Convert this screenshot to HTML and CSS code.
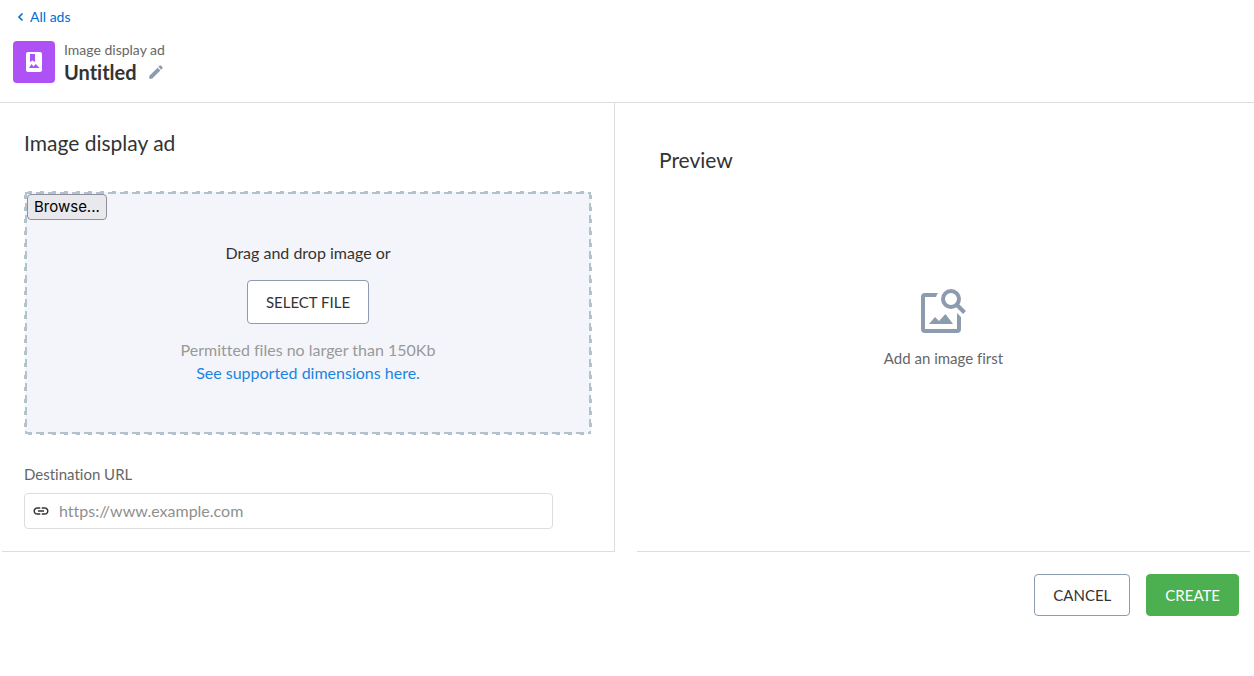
FILE: index.html
```html
<!DOCTYPE html>
<html lang="en">
<head>
<meta charset="utf-8">
<meta name="viewport" content="width=device-width, initial-scale=1">
<title>Image display ad</title>
<link rel="stylesheet" href="styles.css">
</head>
<body>
<header class="header">
  <a class="back" href="#">
    <svg class="back-icon" viewBox="0 0 7 10" aria-hidden="true"><path d="M5.500 1.500 2 5 5.500 8.500" fill="none" stroke="currentColor" stroke-width="1.600"/></svg>
    All ads
  </a>
  <div class="title-row">
    <div class="ad-icon">
      <svg viewBox="0 0 24 24" aria-hidden="true"><path fill="#fff" d="M18 2H6c-1.100 0-2 .9-2 2v16c0 1.100.9 2 2 2h12c1.100 0 2-.9 2-2V4c0-1.100-.9-2-2-2zM8 4h5v8l-2.500-1.500L8 12V4zM7 18l2.500-4 2 2.500 2.300-2.500L17.500 18H7z"/></svg>
    </div>
    <div>
      <div class="kind">Image display ad</div>
      <div class="name-row">
        <h1 class="name">Untitled</h1>
        <button class="edit" type="button" aria-label="Edit name">
          <svg viewBox="0 0 24 24" aria-hidden="true"><path fill="currentColor" d="M3 17.250V21h3.750L17.810 9.940l-3.750-3.750L3 17.250zM20.710 7.040a1 1 0 0 0 0-1.410l-2.340-2.340a1 1 0 0 0-1.410 0l-1.830 1.830 3.750 3.750 1.830-1.830z"/></svg>
        </button>
      </div>
    </div>
  </div>
</header>
<main>
  <div class="panels">
    <section class="panel editor">
      <h2 class="heading">Image display ad</h2>
      <div class="dropzone">
        <button class="browse" type="button">Browse...</button>
        <div class="drop-content">
          <p class="drop-text">Drag and drop image or</p>
          <button class="button" type="button">SELECT FILE</button>
          <p class="hint">Permitted files no larger than 150Kb</p>
          <a class="link" href="#">See supported dimensions here.</a>
        </div>
      </div>
      <label class="label" for="url">Destination URL</label>
      <div class="field">
        <svg class="field-icon" viewBox="0 0 24 24" aria-hidden="true"><path fill="currentColor" d="M3.900 12c0-1.710 1.390-3.100 3.100-3.100h4V7H7c-2.760 0-5 2.240-5 5s2.240 5 5 5h4v-1.900H7c-1.710 0-3.100-1.390-3.100-3.100zM8 13h8v-2H8v2zm9-6h-4v1.900h4c1.710 0 3.100 1.390 3.100 3.100s-1.390 3.100-3.100 3.100h-4V17h4c2.760 0 5-2.240 5-5s-2.240-5-5-5z"/></svg>
        <input class="input" id="url" type="url" placeholder="https://www.example.com">
      </div>
    </section>
    <section class="panel preview">
      <h2 class="heading">Preview</h2>
      <div class="empty">
        <svg class="empty-icon" viewBox="0 0 46 46" aria-hidden="true">
          <path fill="currentColor" d="M17 5H4Q0 5 0 9V41Q0 45 4 45H36Q40 45 40 41V29L36 25V41H4V9H15Q15.500 7 17 5Z"/>
          <circle cx="30" cy="11" r="8" fill="none" stroke="currentColor" stroke-width="4"/>
          <path d="M35.500 16.500 43.500 24.500" stroke="currentColor" stroke-width="4"/>
          <path fill="currentColor" d="M8 36 14 29 18 33 24.500 26 32 36Z"/>
        </svg>
        <p class="empty-text">Add an image first</p>
      </div>
    </section>
  </div>
  <div class="actions">
    <button class="button" type="button">CANCEL</button>
    <button class="button primary" type="button">CREATE</button>
  </div>
</main>
</body>
</html>
```
FILE: styles.css
```css
* { box-sizing: border-box; }
body {
  margin: 0;
  background: #fff;
  color: #333;
  font-family: Lato, "Open Sans", sans-serif;
  font-size: 16px;
  line-height: 24px;
  font-variant-ligatures: none;
}
h1, h2, p { margin: 0; font-weight: 400; }
button, input { font: inherit; color: inherit; }
button { cursor: pointer; }
svg { display: block; }
a { text-decoration: none; }
.header { border-bottom: 1px solid #ddd; padding: 8px 12px 17px 13px; }
.back {
  display: flex;
  align-items: center;
  gap: 6px;
  width: fit-content;
  margin-left: 4px;
  color: #0070d2;
  font-size: 14px;
  line-height: 18px;
}
.back-icon { width: 7px; height: 10px; }
.title-row { display: flex; gap: 9px; margin-top: 15px; }
.ad-icon {
  display: grid;
  place-items: center;
  width: 42px;
  height: 42px;
  border-radius: 4px;
  background: #ae52f5;
}
.ad-icon svg { width: 24px; height: 24px; }
.kind { color: #666; font-size: 14px; line-height: 18px; }
.name-row { display: flex; align-items: center; gap: 10px; }
.name { font-size: 20px; font-weight: 700; line-height: 26px; }
.edit { border: 0; padding: 0; background: none; color: #8c9bad; }
.edit svg { width: 18px; height: 18px; }
.panels {
  display: grid;
  grid-template-columns: 1fr 1fr;
  gap: 22px;
  padding: 0 4px 0 2px;
}
.panel { border-bottom: 1px solid #ddd; }
.editor { border-right: 1px solid #ddd; padding: 26px 22px 22px; }
.heading { font-size: 21px; line-height: 28px; }
.dropzone {
  --across: repeating-linear-gradient(90deg, #b4c2cd 0 8px, transparent 8px 12px);
  --down: repeating-linear-gradient(180deg, #b4c2cd 0 8px, transparent 8px 12px);
  --across-edge: repeating-linear-gradient(90deg, #fff 0 4px, #b4c2cd 4px 8px, #fff 8px 12px);
  --down-edge: repeating-linear-gradient(180deg, #fff 0 4px, #b4c2cd 4px 8px, #fff 8px 12px);
  min-height: 244px;
  margin-top: 34px;
  padding: 3px;
  background:
    var(--across-edge) top / 100% 1px no-repeat,
    var(--across-edge) bottom / 100% 1px no-repeat,
    var(--down-edge) left / 1px 100% no-repeat,
    var(--down-edge) right / 1px 100% no-repeat,
    var(--across) top / 100% 3px no-repeat,
    var(--across) bottom / 100% 3px no-repeat,
    var(--down) left / 3px 100% no-repeat,
    var(--down) right / 3px 100% no-repeat,
    #f4f5fa;
}
.browse {
  display: block;
  height: 26px;
  padding: 0 6px;
  border: 1px solid #8f8f9d;
  border-radius: 4px;
  background: #e9e9ed;
  color: #000;
  font-family: Inter, sans-serif;
  font-size: 15px;
  line-height: 24px;
}
.drop-content {
  display: flex;
  flex-direction: column;
  align-items: center;
  padding-top: 21px;
}
.button {
  height: 42px;
  padding: 0 18px;
  border: 1px solid #8c9bad;
  border-radius: 4px;
  background: #fff;
  font-size: 15px;
}
.drop-content .button { height: 44px; margin: 15px 0 14px; }
.hint, .link { line-height: 23px; }
.hint { color: #999; }
.link { color: #1a84e2; }
.label { display: block; margin-top: 27px; color: #666; font-size: 15px; }
.field {
  display: flex;
  align-items: center;
  gap: 9px;
  height: 36px;
  margin: 7px 39px 0 0;
  padding: 0 7px;
  border: 1px solid #ddd;
  border-radius: 4px;
}
.field-icon { flex: none; width: 18px; height: 18px; }
.input { flex: 1; min-width: 0; border: 0; padding: 0; background: none; outline: 0; }
.input::placeholder { color: #8f8f8f; opacity: 1; }
.preview { padding: 43px 22px 22px; }
.empty {
  display: flex;
  flex-direction: column;
  align-items: center;
  margin-top: 114px;
}
.empty-icon { width: 46px; height: 46px; color: #8c9bad; }
.empty-text { margin-top: 12px; color: #666; font-size: 15px; }
.actions {
  display: flex;
  justify-content: flex-end;
  gap: 16px;
  padding: 22px 15px;
}
.primary { border-color: #4caf50; background: #4caf50; color: #fff; }
```
